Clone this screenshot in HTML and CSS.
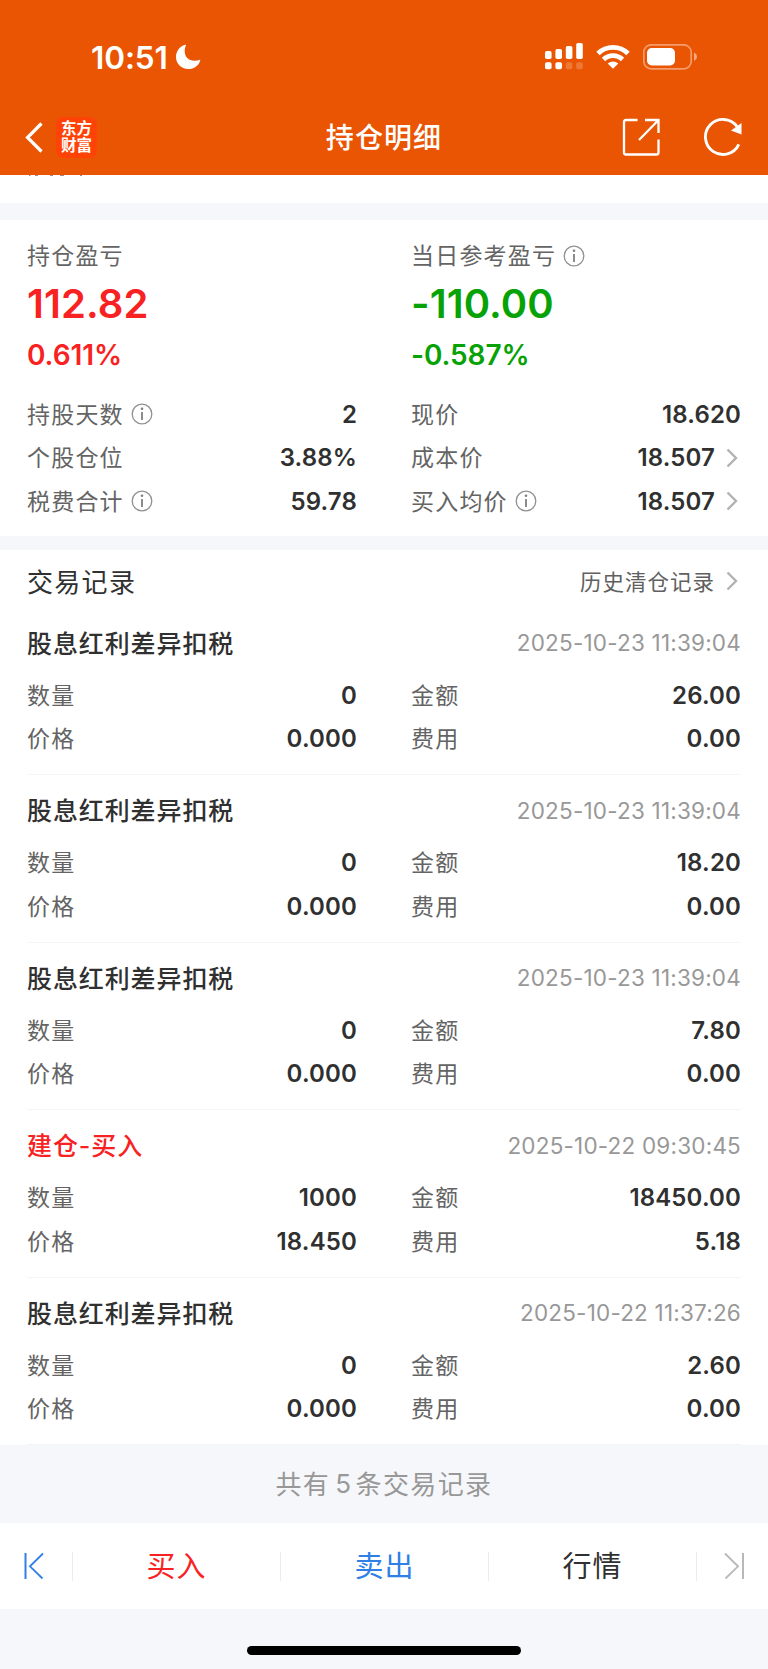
FILE: index.html
```
<!DOCTYPE html>
<html lang="zh-CN">
<head>
    <meta charset="UTF-8">
    <meta name="viewport" content="width=device-width, initial-scale=1.0">
    <title>持仓明细</title>
    <link rel="stylesheet" href="styles.css">
</head>
<body>
    <!-- 共用图标 -->
    <svg class="defs" width="0" height="0">
        <symbol id="info" viewBox="0 0 22 22">
            <circle cx="11" cy="11" r="9.8" fill="none" stroke="#909090" stroke-width="1.3"/>
            <circle cx="11" cy="5.8" r="1.3" fill="#808080"/>
            <path d="M11 9v8" stroke="#808080" stroke-width="1.8"/>
        </symbol>
        <symbol id="arrow" viewBox="0 0 12 20">
            <path d="M1.5 1.5L10 10L1.5 18.5" fill="none" stroke="#b2b2b2" stroke-width="2.4"/>
        </symbol>
    </svg>

    <header class="header">
        <div class="status">
            <div class="time">
                <span>10:51</span>
                <svg width="26" height="26" viewBox="0 0 26 26"><path d="M10 .8C4.800 2.500 1 7.300 1 13c0 6.800 5.400 12 12.300 12 5.700 0 10.300-3.300 11.900-8.300.2-.7-.3-1.100-1-.8-1.200.5-2.800.8-4.500.8-6.300 0-10-3.900-10-9.800 0-2 .6-3.700 1.100-5.100.3-.7 0-1.300-.8-1z" fill="#fff"/></svg>
            </div>
            <div class="status-icons">
                <svg width="38" height="27" viewBox="0 0 38 27" fill="#fff">
                    <rect x="0" y="8" width="6.600" height="8" rx="1.800"/>
                    <rect x="10.400" y="6" width="6.600" height="10" rx="1.800"/>
                    <rect x="20.800" y="3" width="6.600" height="13" rx="1.800"/>
                    <rect x="31.200" y="0" width="6.600" height="16" rx="1.800"/>
                    <rect x="0" y="19.300" width="6.600" height="7" rx="1.800"/>
                    <rect x="10.400" y="19.300" width="6.600" height="7" rx="1.800"/>
                    <rect x="20.800" y="19.300" width="6.600" height="7" rx="1.800" opacity=".2"/>
                    <rect x="31.200" y="19.300" width="6.600" height="7" rx="1.800" opacity=".2"/>
                </svg>
                <svg class="wifi" width="34" height="26" viewBox="0 0 34 26" fill="none" stroke="#fff" stroke-width="4.900">
                    <path d="M2 9.500a21.500 21.500 0 0 1 30 0"/>
                    <path d="M7.500 15.500a13.600 13.600 0 0 1 19 0"/>
                    <path d="M17 24.800L11.700 19.500Q17 15.300 22.300 19.500z" fill="#fff" stroke="none"/>
                </svg>
                <svg width="54" height="26" viewBox="0 0 54 26">
                    <rect x=".8" y=".8" width="47.400" height="24" rx="7.500" fill="none" stroke="#fff" stroke-width="1.700" opacity=".42"/>
                    <rect x="4" y="4" width="28" height="17.500" rx="4.800" fill="#fff"/>
                    <path d="M51 8.500q3 1.500 3 4.300t-3 4.300z" fill="#fff" opacity=".5"/>
                </svg>
            </div>
        </div>
        <nav class="nav">
            <div class="nav-side">
                <svg width="18" height="31" viewBox="0 0 18 31"><path d="M16.500 1.500L2.500 15.500L16.500 29.500" fill="none" stroke="#fff" stroke-width="3.200"/></svg>
                <div class="logo">东方<br>财富</div>
            </div>
            <h1 class="title">持仓明细</h1>
            <div class="nav-side nav-right">
                <svg width="38" height="38" viewBox="0 0 38 38" fill="none" stroke="#fff" stroke-width="2.300">
                    <path d="M15.500 2H4Q2 2 2 4V34.500Q2 36.500 4 36.500H34.500Q36.500 36.500 36.500 34.500V21.500M23 2H36.500V15M36 2.500L17 22"/>
                </svg>
                <svg width="40" height="38" viewBox="0 0 40 38">
                    <path d="M35.800 26.300A17.500 17.500 0 1 1 34 8.500" fill="none" stroke="#fff" stroke-width="2.900"/>
                    <path d="M38.500 5V16.500L28 12.500z" fill="#fff"/>
                </svg>
            </div>
        </nav>
    </header>

    <!-- 滚动到标题栏下方的内容边缘 -->
    <div class="strip">
        <svg width="120" height="2" viewBox="0 0 120 2" stroke="#b08a78" stroke-width="1"><path d="M29 .5h1.500M35 .5h3M50 .5h3M60 .5h4M80 .5h2"/></svg>
    </div>

    <section class="summary">
        <div class="col">
            <div class="label">持仓盈亏</div>
            <div class="big red">112.82</div>
            <div class="percent red">0.611%</div>
            <div class="row"><span class="label">持股天数<svg class="info"><use href="#info"/></svg></span><b>2</b></div>
            <div class="row"><span class="label">个股仓位</span><b>3.88%</b></div>
            <div class="row"><span class="label">税费合计<svg class="info"><use href="#info"/></svg></span><b>59.78</b></div>
        </div>
        <div class="col">
            <div class="label">当日参考盈亏<svg class="info"><use href="#info"/></svg></div>
            <div class="big green">-110.00</div>
            <div class="percent green">-0.587%</div>
            <div class="row"><span class="label">现价</span><b>18.620</b></div>
            <div class="row"><span class="label">成本价</span><b>18.507<svg class="arrow"><use href="#arrow"/></svg></b></div>
            <div class="row"><span class="label">买入均价<svg class="info"><use href="#info"/></svg></span><b>18.507<svg class="arrow"><use href="#arrow"/></svg></b></div>
        </div>
    </section>

    <section class="records">
        <div class="records-head">
            <h2>交易记录</h2>
            <a class="history">历史清仓记录<svg class="arrow"><use href="#arrow"/></svg></a>
        </div>

        <div class="record">
            <div class="record-head"><h3>股息红利差异扣税</h3><time>2025-10-23 11:39:04</time></div>
            <div class="grid">
                <div class="row"><span class="label">数量</span><b>0</b></div>
                <div class="row"><span class="label">金额</span><b>26.00</b></div>
                <div class="row"><span class="label">价格</span><b>0.000</b></div>
                <div class="row"><span class="label">费用</span><b>0.00</b></div>
            </div>
        </div>

        <div class="record">
            <div class="record-head"><h3>股息红利差异扣税</h3><time>2025-10-23 11:39:04</time></div>
            <div class="grid">
                <div class="row"><span class="label">数量</span><b>0</b></div>
                <div class="row"><span class="label">金额</span><b>18.20</b></div>
                <div class="row"><span class="label">价格</span><b>0.000</b></div>
                <div class="row"><span class="label">费用</span><b>0.00</b></div>
            </div>
        </div>

        <div class="record">
            <div class="record-head"><h3>股息红利差异扣税</h3><time>2025-10-23 11:39:04</time></div>
            <div class="grid">
                <div class="row"><span class="label">数量</span><b>0</b></div>
                <div class="row"><span class="label">金额</span><b>7.80</b></div>
                <div class="row"><span class="label">价格</span><b>0.000</b></div>
                <div class="row"><span class="label">费用</span><b>0.00</b></div>
            </div>
        </div>

        <div class="record">
            <div class="record-head"><h3 class="red">建仓-买入</h3><time>2025-10-22 09:30:45</time></div>
            <div class="grid">
                <div class="row"><span class="label">数量</span><b>1000</b></div>
                <div class="row"><span class="label">金额</span><b>18450.00</b></div>
                <div class="row"><span class="label">价格</span><b>18.450</b></div>
                <div class="row"><span class="label">费用</span><b>5.18</b></div>
            </div>
        </div>

        <div class="record">
            <div class="record-head"><h3>股息红利差异扣税</h3><time>2025-10-22 11:37:26</time></div>
            <div class="grid">
                <div class="row"><span class="label">数量</span><b>0</b></div>
                <div class="row"><span class="label">金额</span><b>2.60</b></div>
                <div class="row"><span class="label">价格</span><b>0.000</b></div>
                <div class="row"><span class="label">费用</span><b>0.00</b></div>
            </div>
        </div>
    </section>

    <div class="count">共有<span>5</span>条交易记录</div>

    <footer class="tabbar">
        <div class="tab-edge"><svg width="22" height="28" viewBox="0 0 22 28" fill="none" stroke="#2f7fe6"><path d="M2.500 1V27" stroke-width="2"/><path d="M20 1.500L7 14.300L19.500 26.500" stroke-width="1.800"/></svg></div>
        <div class="tab red">买入</div>
        <div class="tab blue">卖出</div>
        <div class="tab">行情</div>
        <div class="tab-edge last"><svg width="22" height="28" viewBox="0 0 22 28" fill="none" stroke="#b8b8b8"><path d="M20 1V27" stroke-width="2"/><path d="M2 1.500L15 14.300L2.500 26.500" stroke-width="1.800"/></svg></div>
    </footer>
    <div class="home"></div>
</body>
</html>
```
FILE: styles.css
```
* {
    box-sizing: border-box;
}

body {
    margin: 0;
    width: 768px;
    height: 1669px;
    overflow: hidden;
    background: #f6f7fa;
    color: #303030;
    font-family: Inter, "Noto Sans CJK SC", sans-serif;
}

h1, h2, h3 {
    margin: 0;
}

svg {
    display: block;
    flex-shrink: 0;
}

.defs {
    position: absolute;
}

.red {
    color: #f82222;
}

.green {
    color: #06a206;
}

.blue {
    color: #2f7fe6;
}

/* 顶部 */
.header {
    height: 175px;
    background: #ea5504;
    color: #fff;
}

.status {
    display: flex;
    justify-content: space-between;
    height: 99px;
    padding: 37px 71px 0 91px;
}

.time {
    display: flex;
    align-items: center;
    gap: 7px;
    height: 40px;
    font-size: 31.5px;
    font-weight: 600;
    letter-spacing: -0.1px;
}

.status-icons {
    display: flex;
    align-items: center;
    height: 39px;
}

.wifi {
    margin: 0 13px;
}

.nav {
    display: flex;
    align-items: center;
    justify-content: space-between;
    height: 76px;
    padding: 0 25px;
}

.nav-side {
    display: flex;
    align-items: center;
    gap: 13px;
    width: 120px;
}

.nav-right {
    justify-content: flex-end;
    gap: 43px;
}

.logo {
    width: 41px;
    height: 41px;
    padding-top: 3px;
    border-radius: 8px;
    background: #ff4206;
    font-size: 15.5px;
    font-weight: 700;
    line-height: 17px;
    text-align: center;
}

.title {
    padding-bottom: 2px;
    font-size: 28px;
    font-weight: 500;
    letter-spacing: 1.1px;
}

.strip {
    height: 28px;
    background: #fff;
}

/* 盈亏汇总 */
.summary {
    display: grid;
    grid-template-columns: 1fr 1fr;
    gap: 54px;
    height: 316px;
    margin-top: 17px;
    padding: 15px 27px 0;
    background: #fff;
}

.label {
    display: flex;
    align-items: center;
    height: 40px;
    padding-bottom: 2px;
    color: #646464;
    font-size: 23px;
    letter-spacing: 1.2px;
}

.info {
    width: 22px;
    height: 22px;
    margin: 3px 0 0 7px;
}

.arrow {
    width: 12px;
    height: 20px;
    margin: 0 3px 0 11px;
}

.big {
    height: 58px;
    font-size: 40px;
    font-weight: 600;
    letter-spacing: 0.1px;
    line-height: 58px;
}

.percent {
    height: 44px;
    margin-bottom: 15px;
    font-size: 28px;
    font-weight: 600;
    letter-spacing: -0.1px;
    line-height: 44px;
}

.row {
    display: flex;
    align-items: center;
    justify-content: space-between;
    height: 43.6px;
}

.row b {
    display: flex;
    align-items: center;
    padding-top: 1px;
    font-size: 24px;
    font-weight: 600;
    letter-spacing: 0.15px;
}

/* 交易记录 */
.records {
    height: 895px;
    margin-top: 14px;
    padding: 0 27px;
    background: #fff;
}

.records-head {
    display: flex;
    align-items: center;
    justify-content: space-between;
    height: 57.5px;
    padding-top: 4px;
}

.records-head h2 {
    font-size: 26px;
    font-weight: 400;
    letter-spacing: 1.3px;
}

.history {
    display: flex;
    align-items: center;
    color: #606060;
    font-size: 21.5px;
    letter-spacing: 1px;
}

.record {
    height: 167.5px;
    padding-top: 15.5px;
    border-bottom: 1px solid #f4f5f7;
}

.record-head {
    display: flex;
    align-items: center;
    justify-content: space-between;
    height: 40px;
    margin-bottom: 10px;
}

.record-head h3 {
    padding-bottom: 3px;
    font-size: 25px;
    font-weight: 500;
    letter-spacing: 0.9px;
}

.record-head time {
    padding-bottom: 1px;
    color: #989898;
    font-size: 22.5px;
    letter-spacing: 0.2px;
}

.grid {
    display: grid;
    grid-template-columns: 1fr 1fr;
    column-gap: 54px;
}

/* 底部 */
.count {
    display: flex;
    align-items: center;
    justify-content: center;
    height: 78px;
    padding-bottom: 4px;
    color: #989898;
    font-size: 26px;
    letter-spacing: 1.4px;
}

.count span {
    margin: 2px 3px 0 5px;
}

.tabbar {
    display: flex;
    align-items: center;
    height: 86px;
    background: #fff;
}

.tab-edge {
    display: flex;
    width: 72px;
    padding-left: 23px;
}

.tab {
    flex: 1;
    height: 29px;
    border-left: 1px solid #ebecee;
    font-size: 29px;
    letter-spacing: 1px;
    line-height: 29px;
    text-align: center;
}

.last {
    height: 29px;
    border-left: 1px solid #ebecee;
    padding-left: 26px;
}

.home {
    width: 274px;
    height: 9px;
    margin: 37px auto 0;
    border-radius: 5px;
    background: #000;
}
```
